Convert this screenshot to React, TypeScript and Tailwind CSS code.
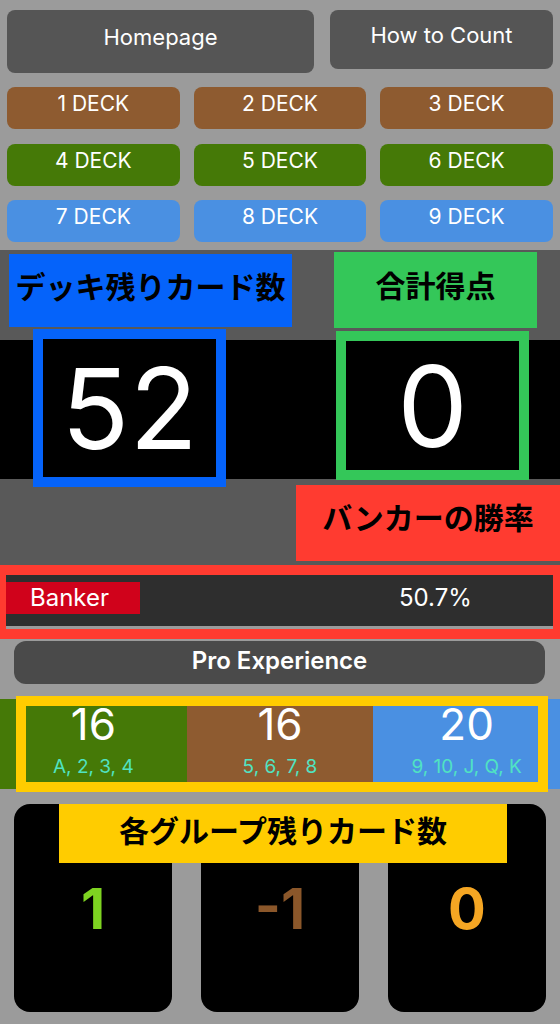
const decks = [
  { label: '1 DECK', color: 'bg-[#8e5b30]' },
  { label: '2 DECK', color: 'bg-[#8e5b30]' },
  { label: '3 DECK', color: 'bg-[#8e5b30]' },
  { label: '4 DECK', color: 'bg-[#457907]' },
  { label: '5 DECK', color: 'bg-[#457907]' },
  { label: '6 DECK', color: 'bg-[#457907]' },
  { label: '7 DECK', color: 'bg-[#4a90e2]' },
  { label: '8 DECK', color: 'bg-[#4a90e2]' },
  { label: '9 DECK', color: 'bg-[#4a90e2]' },
];

const groups = [
  { count: 16, cards: 'A, 2, 3, 4', color: 'bg-[#457907]' },
  { count: 16, cards: '5, 6, 7, 8', color: 'bg-[#8e5b30]' },
  { count: 20, cards: '9, 10, J, Q, K', color: 'bg-[#4a90e2]' },
];

const scores = [
  { value: '1', color: 'text-[#7ed321]' },
  { value: '-1', color: 'text-[#8b572a]' },
  { value: '0', color: 'text-[#f5a623]' },
];

export default function App() {
  return (
    <div className="w-[560px] h-[1024px] overflow-hidden bg-[#9b9b9b] flex flex-col font-['Inter','Noto_Sans_CJK_JP',sans-serif]">
      {/* Top nav + deck selection */}
      <section className="px-[7px] pt-[10px] pb-[8px]">
        <div className="flex items-start justify-between">
          <button className="w-[307px] h-[63px] pb-[9px] rounded-[8px] bg-[#555555] text-white text-[22px] leading-none">
            Homepage
          </button>
          <button className="w-[223px] h-[59px] pb-[9px] rounded-[8px] bg-[#555555] text-white text-[22px] leading-none">
            How to Count
          </button>
        </div>
        <div className="mt-[14px] grid grid-cols-3 gap-x-[14px] gap-y-[14.5px]">
          {decks.map((d) => (
            <button
              key={d.label}
              className={`h-[42px] pb-[9px] rounded-[8px] ${d.color} text-white text-[21px] leading-none`}
            >
              {d.label}
            </button>
          ))}
        </div>
      </section>

      {/* Count and score */}
      <section className="bg-[#595959] pb-[4px]">
        <div className="flex items-start h-[78px]">
          <div className="ml-[9px] mt-[4px] w-[283px] h-[73px] pb-[8px] bg-[#0563fa] flex items-center justify-center text-black font-bold text-[30px] leading-none">
            デッキ残りカード数
          </div>
          <div className="ml-[42px] mt-[2px] w-[203px] h-[76px] pb-[8px] bg-[#34c759] flex items-center justify-center text-black font-bold text-[30px] leading-none">
            合計得点
          </div>
        </div>
        <div className="mt-[12px] h-[139px] bg-black flex items-start">
          <div className="ml-[33px] -mt-[11px] w-[193px] h-[158px] shrink-0 border-[10px] border-[#0563fa] bg-black flex items-center justify-center text-white text-[112px] leading-none">
            52
          </div>
          <div className="ml-[110px] -mt-[9px] w-[193px] h-[149px] shrink-0 border-[10px] border-[#34c759] bg-black flex items-center justify-center text-white text-[112px] leading-none">
            0
          </div>
        </div>
        <div className="mt-[6px] ml-auto w-[264px] h-[76px] pb-[10px] bg-[#ff3b30] flex items-center justify-center text-black font-bold text-[30px] leading-none">
          バンカーの勝率
        </div>
      </section>

      {/* Banker win rate */}
      <section className="bg-[#ff3b30] pt-[10px] pb-[10px] pl-[6px] pr-[7px]">
        <div className="h-[54px] bg-[#2e2e2e] border-b-[3px] border-[#9b9b9b] flex items-start pt-[7px]">
          <div className="w-[134px] h-[32px] bg-[#d0021b] flex items-center pl-[24px] text-white text-[24px] leading-none">
            Banker
          </div>
          <div className="ml-[259px] h-[32px] flex items-center text-white text-[24px] leading-none">
            50.7%
          </div>
        </div>
      </section>

      {/* Pro + groups */}
      <section className="flex flex-col">
        <button className="mt-[2px] ml-[14px] w-[531px] h-[43px] pb-[3px] rounded-[12px] bg-[#4a4a4a] text-white font-semibold text-[24px] leading-none">
          Pro Experience
        </button>

        <div className="relative mt-[12px] h-[96px]">
          <div className="absolute inset-x-0 top-[3px] bottom-[3px] grid grid-cols-3">
            {groups.map((g) => (
              <div key={g.cards} className={`${g.color} flex flex-col items-center`}>
                <span className="mt-[3px] text-white text-[44px] leading-none">{g.count}</span>
                <span className="mt-[11px] text-[#50e3c2] text-[19px] leading-none">{g.cards}</span>
              </div>
            ))}
          </div>
          <div className="absolute left-[16px] top-0 w-[532px] h-[96px] border-[10px] border-[#ffcc00]" />
        </div>

        <div className="relative mt-[12px] flex gap-[29px] pl-[14px]">
          {scores.map((s) => (
            <div
              key={s.value}
              className="w-[158px] h-[208px] rounded-[16px] bg-black flex justify-center pt-[77px]"
            >
              <span className={`${s.color} font-bold text-[56px] leading-none`}>{s.value}</span>
            </div>
          ))}
          <div className="absolute left-[59px] top-0 w-[448px] h-[59px] pb-[6px] bg-[#ffcc00] flex items-center justify-center text-black font-bold text-[30px] leading-none">
            各グループ残りカード数
          </div>
        </div>
      </section>
    </div>
  );
}
